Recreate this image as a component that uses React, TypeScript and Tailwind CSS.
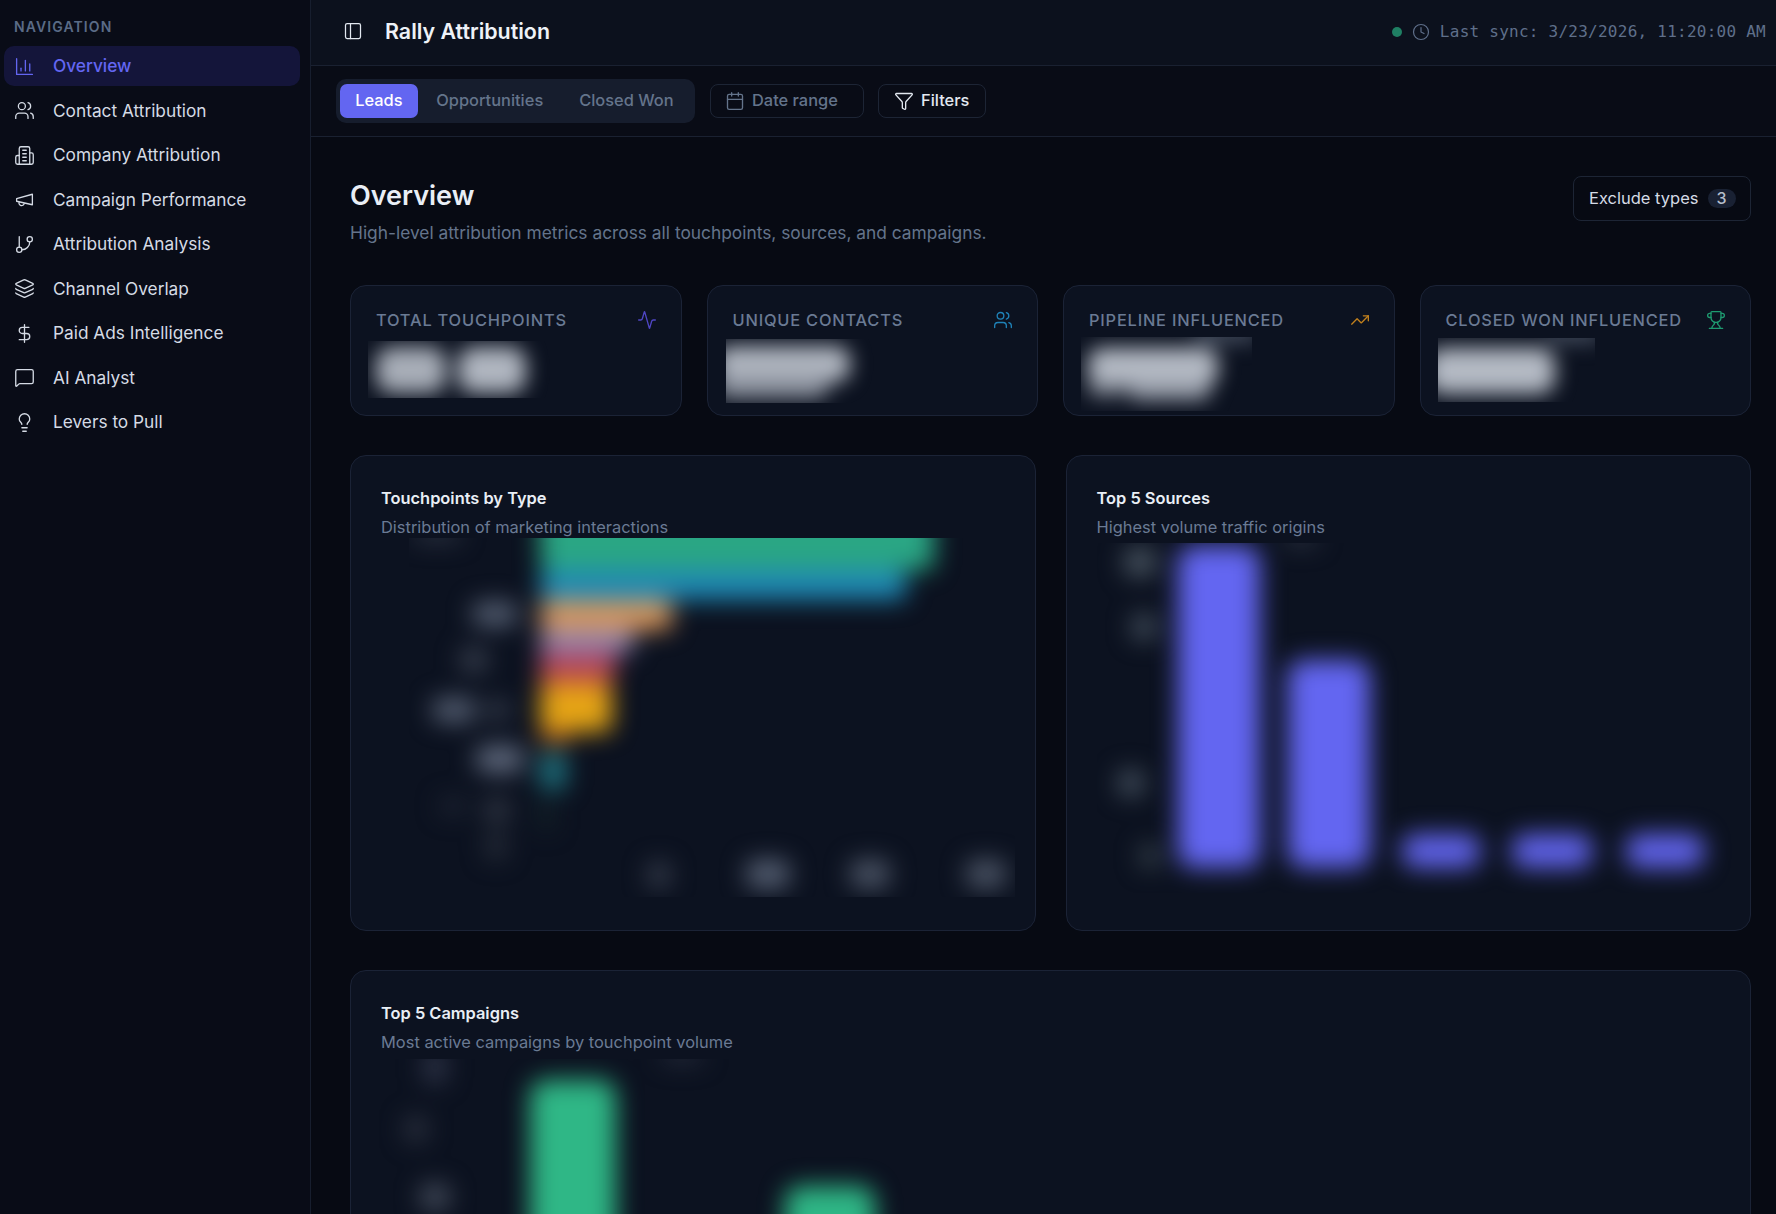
import { FC, ReactNode } from 'react';
import {
  Activity,
  Calendar,
  Clock,
  DollarSign,
  Filter,
  GitBranch,
  Layers,
  Lightbulb,
  MessageSquare,
  PanelLeft,
  TrendingUp,
  Trophy,
  Users,
} from 'lucide-react';

// The older lucide drawings of these three, the package's current ones differ
const OutlineIcon: FC<{ size: number; strokeWidth: number; className?: string; paths: string[] }> = ({
  size,
  strokeWidth,
  className,
  paths,
}) => (
  <svg
    width={size}
    height={size}
    viewBox="0 0 24 24"
    fill="none"
    stroke="currentColor"
    strokeWidth={strokeWidth}
    strokeLinecap="round"
    strokeLinejoin="round"
    className={className}
  >
    {paths.map((d) => (
      <path key={d} d={d} />
    ))}
  </svg>
);

type IconProps = { size: number; strokeWidth: number; className?: string };

const BarsIcon: FC<IconProps> = (props) => (
  <OutlineIcon {...props} paths={['M3 3v18h18', 'M18 17V9', 'M13 17V5', 'M8 17v-3']} />
);

const CompanyIcon: FC<IconProps> = (props) => (
  <OutlineIcon
    {...props}
    paths={[
      'M6 22V4a2 2 0 0 1 2-2h8a2 2 0 0 1 2 2v18Z',
      'M6 12H4a2 2 0 0 0-2 2v6a2 2 0 0 0 2 2h2',
      'M18 9h2a2 2 0 0 1 2 2v9a2 2 0 0 1-2 2h-2',
      'M10 6h4',
      'M10 10h4',
      'M10 14h4',
      'M10 18h4',
    ]}
  />
);

const CampaignIcon: FC<IconProps> = (props) => (
  <OutlineIcon {...props} paths={['m3 11 18-5v12L3 14v-3z', 'M11.6 16.8a3 3 0 1 1-5.8-1.6']} />
);

const navItems = [
  { label: 'Overview', icon: BarsIcon, active: true },
  { label: 'Contact Attribution', icon: Users },
  { label: 'Company Attribution', icon: CompanyIcon },
  { label: 'Campaign Performance', icon: CampaignIcon },
  { label: 'Attribution Analysis', icon: GitBranch },
  { label: 'Channel Overlap', icon: Layers },
  { label: 'Paid Ads Intelligence', icon: DollarSign },
  { label: 'AI Analyst', icon: MessageSquare },
  { label: 'Levers to Pull', icon: Lightbulb },
];

type Blob = { x: number; y: number; w: number; h: number; fill: string; rx?: number };

// Blurred chart or value: shapes are given in page coordinates through the viewBox
const Redacted: FC<{ box: [number, number, number, number]; blobs: Blob[]; className: string; blur: string }> = ({
  box,
  blobs,
  className,
  blur,
}) => (
  <div className={`overflow-hidden ${className}`}>
    <svg
      width={box[2]}
      height={box[3]}
      viewBox={box.join(' ')}
      className={`overflow-visible ${blur}`}
    >
      {blobs.map((b, i) => (
        <rect key={i} x={b.x} y={b.y} width={b.w} height={b.h} rx={b.rx ?? 10} fill={b.fill} />
      ))}
    </svg>
  </div>
);

const Kpi: FC<{ label: string; icon: ReactNode; children: ReactNode }> = ({ label, icon, children }) => (
  <div className="h-[131px] rounded-[16px] border border-[#1b2336] bg-[#0c1220] pl-[25px] pr-[24px] pt-[24px] overflow-hidden">
    <div className="flex items-center justify-between h-[20px]">
      <span className="text-[16.4px] tracking-[0.8px] text-[#6a7a94] font-medium whitespace-nowrap">{label}</span>
      {icon}
    </div>
    {children}
  </div>
);

const ChartCard: FC<{ title: string; subtitle: string; className: string; children: ReactNode }> = ({
  title,
  subtitle,
  className,
  children,
}) => (
  <div className={`rounded-[16px] border border-[#1b2336] bg-[#0c1220] pt-[30px] overflow-hidden ${className}`}>
    <h3 className="pl-[30px] text-[16.4px] leading-[24px] font-semibold text-[#e9eef5]">{title}</h3>
    <p className="pl-[30px] mt-[5px] text-[16.45px] leading-[24px] text-[#6a7a94]">{subtitle}</p>
    {children}
  </div>
);

const slate = '#566073';
const dim = '#3a4150';

export default function App() {
  return (
    <div
      className="flex h-screen w-full overflow-hidden bg-[#070a13] text-[16.4px] text-[#d5dbe5]"
      style={{ fontFamily: 'Inter, "Liberation Sans", sans-serif' }}
    >
      {/* Sidebar */}
      <aside className="w-[311px] shrink-0 border-r border-[#171e2e] bg-[#090c17] pl-[4px] pr-[10px] pt-[17px]">
        <div className="pl-[10px] text-[14px] leading-[20px] font-semibold tracking-[1.1px] text-[#5a6b86]">NAVIGATION</div>
        <nav className="mt-[9px] flex flex-col gap-[4.5px]">
          {navItems.map(({ label, icon: Icon, active }) => (
            <div
              key={label}
              className={`flex h-[40px] items-center gap-[18px] rounded-[10px] pl-[10px] text-[17.28px] ${
                active ? 'bg-[#14153a] text-[#6366f1] font-medium' : 'text-[#d5dbe5]'
              }`}
            >
              <Icon size={21} strokeWidth={1.5} className="shrink-0" />
              <span className="whitespace-nowrap">{label}</span>
            </div>
          ))}
        </nav>
      </aside>

      <div className="flex min-w-0 flex-1 flex-col">
        {/* Header */}
        <header className="flex h-[66px] shrink-0 items-center justify-between border-b border-[#1a2131] bg-[#0c111d] pb-[2px] pl-[32px] pr-[10px]">
          <div className="flex items-center gap-[22px]">
            <PanelLeft size={20} strokeWidth={1.5} className="text-[#e2e8f0]" />
            <span className="text-[21.4px] font-semibold text-[#eef2f7]">Rally Attribution</span>
          </div>
          <div className="flex items-center gap-[10px] text-[#5f6f8a]">
            <span className="h-[10px] w-[10px] rounded-full bg-[#1f7f63]" />
            <Clock size={18} strokeWidth={1.6} />
            <span
              className="text-[16px] tracking-[0.25px] whitespace-nowrap"
              style={{ fontFamily: '"DejaVu Sans Mono", "Liberation Mono", monospace' }}
            >
              Last sync: 3/23/2026, 11:20:00 AM
            </span>
          </div>
        </header>

        {/* Toolbar */}
        <div className="flex h-[71px] shrink-0 items-center border-b border-[#1a2131] bg-[#090c16] pb-[1px] pl-[25px]">
          <div className="flex h-[44px] w-[359px] items-center gap-[2px] rounded-[10px] bg-[#161d2d] px-[4px]">
            <span className="flex h-[34px] w-[80px] items-center justify-center rounded-[7px] bg-[#6366f1] font-medium text-white">Leads</span>
            <span className="flex h-[34px] w-[144px] items-center justify-center text-[#64748b] font-medium">Opportunities</span>
            <span className="flex h-[34px] w-[133px] items-center justify-center text-[#64748b] font-medium">Closed Won</span>
          </div>
          <div className="ml-[15px] flex h-[34px] w-[154px] items-center gap-[7px] rounded-[8px] border border-[#1d2535] pl-[14px] text-[#64748b] font-medium">
            <Calendar size={20} strokeWidth={1.6} />
            Date range
          </div>
          <div className="ml-[14px] flex h-[34px] w-[108px] items-center gap-[7px] rounded-[8px] border border-[#1d2535] pl-[15px] text-[#e2e8f0] font-medium">
            <Filter size={20} strokeWidth={1.6} />
            Filters
          </div>
        </div>

        {/* Content */}
        <main className="min-h-0 flex-1 overflow-hidden pl-[39px] pr-[25px] pt-[39px]">
          <div className="flex items-start justify-between">
            <div>
              <h1 className="text-[27px] leading-[36px] mt-[2px] font-semibold text-[#e9eef5]">Overview</h1>
              <p className="mt-[7px] text-[17.35px] leading-[24px] text-[#64748b]">
                High-level attribution metrics across all touchpoints, sources, and campaigns.
              </p>
            </div>
            <div className="flex h-[45px] w-[178px] items-center gap-[9px] rounded-[8px] border border-[#1d2535] pb-[1px] pl-[15px] text-[16.5px] text-[#d5dbe5]">
              Exclude types
              <span className="flex h-[19px] w-[28px] items-center justify-center rounded-full bg-[#192133] text-[16px] font-medium text-[#b6bfcc]">3</span>
            </div>
          </div>

          <div className="mt-[40px] grid grid-cols-4 gap-[25px]">
            <Kpi label="TOTAL TOUCHPOINTS" icon={<Activity size={20} strokeWidth={1.6} className="text-[#4f46c4]" />}>
              <Redacted
                className="-ml-[8px] mt-[11px] h-[57px] w-[211px]"
                blur="blur-[10px]"
                box={[368, 341, 211, 57]}
                blobs={[
                  { x: 376, y: 347, w: 70, h: 46, fill: '#a8aeb8', rx: 16 },
                  { x: 458, y: 347, w: 68, h: 46, fill: '#b0b6c0', rx: 16 },
                ]}
              />
            </Kpi>
            <Kpi label="UNIQUE CONTACTS" icon={<Users size={20} strokeWidth={1.6} className="text-[#1f82b8]" />}>
              <Redacted
                className="-ml-[7px] mt-[9px] h-[64px] w-[210px]"
                blur="blur-[10px]"
                box={[726, 339, 210, 64]}
                blobs={[
                  { x: 716, y: 346, w: 134, h: 36, fill: '#b0b6c0', rx: 14 },
                  { x: 716, y: 376, w: 112, h: 22, fill: '#8e94a0', rx: 10 },
                ]}
              />
            </Kpi>
            <Kpi label="PIPELINE INFLUENCED" icon={<TrendingUp size={20} strokeWidth={1.6} className="text-[#c07f1c]" />}>
              <Redacted
                className="-ml-[8px] mt-[7px] h-[74px] w-[171px]"
                blur="blur-[10px]"
                box={[1081, 337, 171, 74]}
                blobs={[
                  { x: 1088, y: 348, w: 130, h: 38, fill: '#b4bac4', rx: 14 },
                  { x: 1088, y: 382, w: 36, h: 14, fill: '#7e8490', rx: 6 },
                  { x: 1128, y: 382, w: 82, h: 18, fill: '#969ca8', rx: 8 },
                  { x: 1195, y: 326, w: 62, h: 16, fill: '#4a5364', rx: 6 },
                ]}
              />
            </Kpi>
            <Kpi label="CLOSED WON INFLUENCED" icon={<Trophy size={20} strokeWidth={1.6} className="text-[#1e9a70]" />}>
              <Redacted
                className="-ml-[8px] mt-[8px] h-[64px] w-[157px]"
                blur="blur-[10px]"
                box={[1437, 338, 157, 64]}
                blobs={[
                  { x: 1426, y: 348, w: 128, h: 46, fill: '#b4bac4', rx: 16 },
                  { x: 1545, y: 326, w: 55, h: 16, fill: '#4a5364', rx: 6 },
                ]}
              />
            </Kpi>
          </div>

          <div className="mt-[39px] grid grid-cols-2 gap-[30px]">
            <ChartCard title="Touchpoints by Type" subtitle="Distribution of marketing interactions" className="h-[476px]">
              <Redacted
                className="-mt-px ml-[58px] h-[359px] w-[606px]"
                blur="blur-[12px]"
                box={[409, 538, 606, 359]}
                blobs={[
                  { x: 540, y: 510, w: 394, h: 60, fill: '#2aa684', rx: 8 },
                  { x: 540, y: 570, w: 366, h: 30, fill: '#1f88b4', rx: 8 },
                  { x: 540, y: 600, w: 132, h: 30, fill: '#d7955a', rx: 8 },
                  { x: 540, y: 630, w: 94, h: 22, fill: '#8f84ae', rx: 6 },
                  { x: 540, y: 652, w: 76, h: 24, fill: '#b0435f', rx: 4 },
                  { x: 540, y: 676, w: 72, h: 10, fill: '#c8642c', rx: 0 },
                  { x: 540, y: 686, w: 72, h: 46, fill: '#e6a515', rx: 8 },
                  { x: 540, y: 732, w: 30, h: 12, fill: '#9a4d22', rx: 4 },
                  { x: 540, y: 752, w: 26, h: 38, fill: '#1f7480', rx: 8 },
                  { x: 540, y: 800, w: 12, h: 30, fill: '#15262a', rx: 4 },
                  { x: 472, y: 602, w: 46, h: 24, fill: slate },
                  { x: 460, y: 648, w: 28, h: 24, fill: dim },
                  { x: 432, y: 698, w: 44, h: 24, fill: slate },
                  { x: 486, y: 700, w: 24, h: 20, fill: dim },
                  { x: 476, y: 746, w: 48, h: 26, fill: '#626c80' },
                  { x: 484, y: 798, w: 26, h: 24, fill: '#333946' },
                  { x: 440, y: 798, w: 26, h: 16, fill: '#222836' },
                  { x: 486, y: 832, w: 20, h: 28, fill: '#2a303c' },
                  { x: 648, y: 862, w: 22, h: 26, fill: dim },
                  { x: 746, y: 860, w: 44, h: 28, fill: slate },
                  { x: 850, y: 860, w: 40, h: 28, fill: '#4c5566' },
                  { x: 966, y: 860, w: 40, h: 28, fill: '#4c5566' },
                  { x: 412, y: 530, w: 50, h: 10, fill: dim },
                ]}
              />
            </ChartCard>
            <ChartCard title="Top 5 Sources" subtitle="Highest volume traffic origins" className="h-[476px]">
              <Redacted
                className="mt-[4px] ml-[30px] h-[350px] w-[640px]"
                blur="blur-[12px]"
                box={[1097, 543, 640, 350]}
                blobs={[
                  { x: 1178, y: 546, w: 82, h: 322, fill: '#6366f1', rx: 16 },
                  { x: 1288, y: 660, w: 82, h: 208, fill: '#6366f1', rx: 16 },
                  { x: 1402, y: 834, w: 78, h: 34, fill: '#6063ea', rx: 14 },
                  { x: 1512, y: 834, w: 80, h: 34, fill: '#6063ea', rx: 14 },
                  { x: 1626, y: 834, w: 78, h: 34, fill: '#6063ea', rx: 14 },
                  { x: 1124, y: 548, w: 32, h: 28, fill: '#4a5662' },
                  { x: 1132, y: 614, w: 24, h: 26, fill: '#465260' },
                  { x: 1118, y: 770, w: 26, h: 26, fill: '#465260' },
                  { x: 1140, y: 844, w: 20, h: 24, fill: '#3a4650' },
                  { x: 1283, y: 534, w: 36, h: 10, fill: dim },
                ]}
              />
            </ChartCard>
          </div>

          <ChartCard title="Top 5 Campaigns" subtitle="Most active campaigns by touchpoint volume" className="mt-[39px] h-[500px]">
            <Redacted
              className="mt-[5px] ml-[28px] h-[300px] w-[1300px]"
              blur="blur-[12px]"
              box={[379, 1059, 1300, 300]}
              blobs={[
                { x: 530, y: 1080, w: 86, h: 320, fill: '#2fb786', rx: 16 },
                { x: 785, y: 1186, w: 90, h: 220, fill: '#2fb786', rx: 16 },
                { x: 424, y: 1050, w: 22, h: 34, fill: '#30364a' },
                { x: 405, y: 1116, w: 22, h: 26, fill: '#2e3442' },
                { x: 420, y: 1184, w: 30, h: 26, fill: '#454d5c' },
                { x: 660, y: 1050, w: 44, h: 12, fill: '#2a3040' },
              ]}
            />
          </ChartCard>
        </main>
      </div>
    </div>
  );
}
